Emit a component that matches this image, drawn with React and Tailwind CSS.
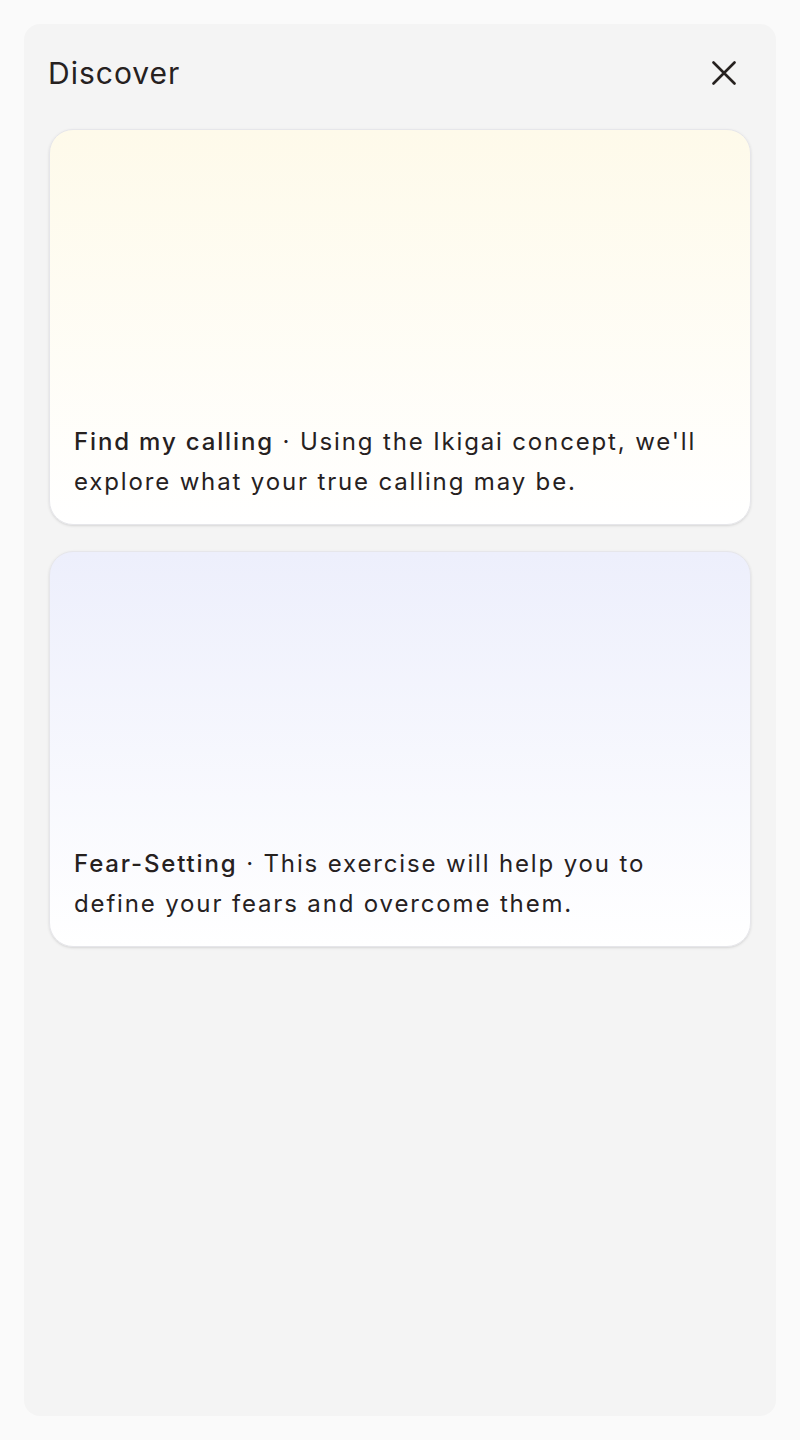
const cards = [
  {
    title: 'Find my calling',
    body: "Using the Ikigai concept, we'll explore what your true calling may be.",
    tint: 'from-[#fefaea]',
  },
  {
    title: 'Fear-Setting',
    body: 'This exercise will help you to define your fears and overcome them.',
    tint: 'from-[#edeffc]',
  },
];

export default function App() {
  return (
    <div className="min-h-[1440px] bg-[#fafafa] p-6 font-['Inter',sans-serif] text-[#26211f]">
      <div className="h-[1392px] rounded-2xl bg-[#f4f4f4] px-[25px] pt-6 flex flex-col">
        {/* header */}
        <div className="h-[50px] flex items-center justify-between">
          <h1 className="text-[30px] leading-none tracking-[1px] -ml-px">Discover</h1>
          <button className="w-[54px] h-[50px] flex items-center justify-center text-[#26211f]">
            <svg className="w-6 h-6" viewBox="0 0 24 24" fill="none" stroke="currentColor" strokeWidth={2.6} strokeLinecap="round">
              <path d="M1.5 1.5l21 21M22.5 1.5l-21 21" />
            </svg>
          </button>
        </div>

        {/* cards */}
        <div className="mt-[31px] flex flex-col gap-[26px]">
          {cards.map(c => (
            <div
              key={c.title}
              className={`h-[396px] rounded-3xl border-[1.5px] border-[#e6e6ea] bg-gradient-to-b ${c.tint} to-white shadow-sm flex flex-col justify-end px-6 pb-[22px]`}
            >
              <p className="text-[24px] leading-[40px] tracking-[1.85px]">
                <span className="font-medium">{c.title}</span>
                {' · '}
                {c.body}
              </p>
            </div>
          ))}
        </div>
      </div>
    </div>
  );
}
